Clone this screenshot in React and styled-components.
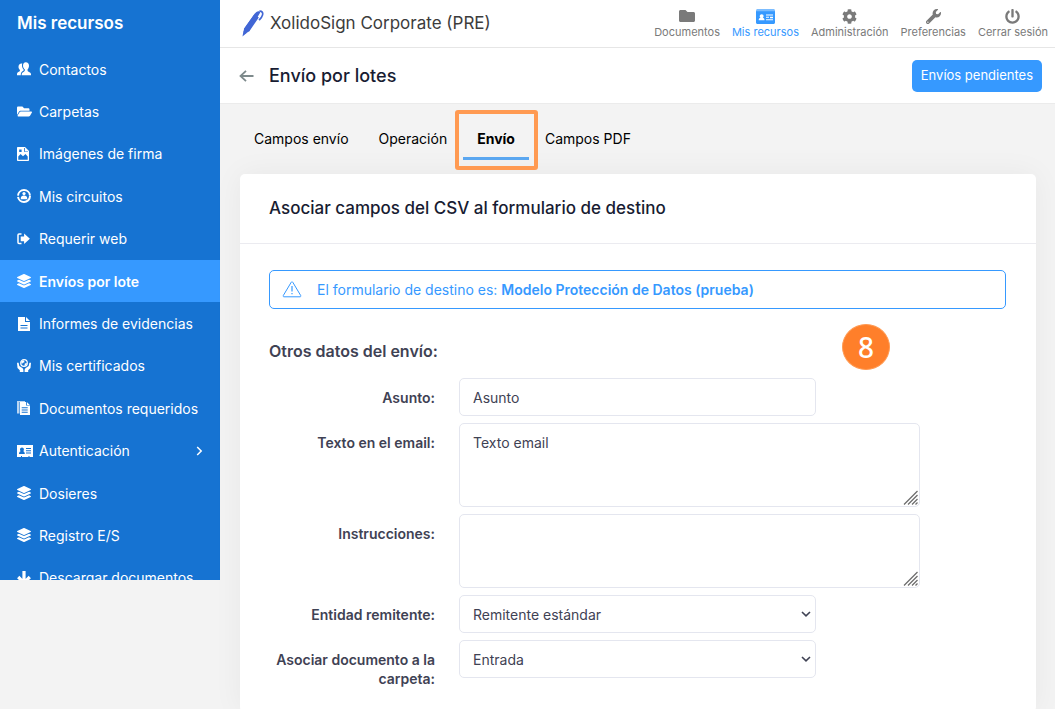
import { useState } from "react";
import styled, { createGlobalStyle, css } from "styled-components";
import {
  FaFolder,
  FaFolderOpen,
  FaLayerGroup,
  FaCog,
  FaWrench,
  FaPowerOff,
} from "react-icons/fa";

const GlobalStyle = createGlobalStyle`
  *, *::before, *::after {
    box-sizing: border-box;
  }

  body {
    margin: 0;
    background: #f3f3f3;
    color: #3f4254;
    font-family: "Inter", "Open Sans", sans-serif;
    font-size: 14px;
    line-height: 19px;
  }

  button, input, select, textarea {
    font: inherit;
    color: inherit;
  }

  h1, h2, h3, p, ul {
    margin: 0;
    padding: 0;
  }
`;

const ContactsIcon = () => (
  <svg width="14" height="14" viewBox="0 0 14 14" fill="currentColor">
    <path d="M8.800.3c2 0 3.200 1.400 3.200 3.400 0 1.500-.6 2.900-1.400 3.600v1.600c.5.900 3.400 1.300 3.400 3.100v1.200H4.700v-1c0-1.800 2.700-2.500 3.100-3.500V7.300C6.700 6.500 6 5.200 6 3.700 6 1.700 7 .3 8.800.3z" />
    <path d="M5.300 1.600C5 2.200 4.900 3 5 3.900c.1 1.400.8 2.900 1.800 3.800v.6C6.300 9 4 9.900 3.800 12v1.200H0v-1.500c0-1.500 2.500-1.800 2.900-2.700V7.900C2 7.200 1.500 6.100 1.500 4.700c0-1.800 1.400-3.500 3.800-3.100z" />
  </svg>
);

const SignatureImageIcon = () => (
  <svg width="12" height="14" viewBox="0 0 12 14" fill="currentColor">
    <path fillRule="evenodd" d="M1 0h7l4 4v9.200c0 .5-.4.800-.8.800H.8c-.5 0-.8-.3-.8-.8V1c0-.6.4-1 1-1zM1.300 9.500v3.200h9.400V9.500L8.500 7 6 9.300 3.600 7zM2.200 2.500V5h2.400V2.500zM7 1v3.800h4V4.200H7.800V1z" />
  </svg>
);

const CircuitIcon = () => (
  <svg width="14" height="14" viewBox="0 0 14 14" fill="none">
    <circle cx="7" cy="7" r="6" stroke="currentColor" strokeWidth="2" strokeDasharray="17.500 1.300" />
    <circle cx="7" cy="4.600" r="1.600" fill="currentColor" />
    <path d="M3.800 10.200V8.900c0-1.600 1.300-2.500 3.200-2.500s3.200.9 3.200 2.500v1.300z" fill="currentColor" />
  </svg>
);

const WebRequestIcon = () => (
  <svg width="13" height="12" viewBox="0 0 13 12" fill="none">
    <path d="M4.500 1H2c-.6 0-1 .4-1 1v7.500c0 .6.400 1 1 1h2.500" stroke="currentColor" strokeWidth="1.500" />
    <path d="M3.700 3.500h3.400V.5l5.800 5.300-5.800 5.300V8.200H3.700z" fill="currentColor" />
  </svg>
);

const ReportIcon = () => (
  <svg width="14" height="14" viewBox="0 0 14 14" fill="currentColor">
    <path fillRule="evenodd" d="M1 0h7v5h5v9H1zM3.500 8v1h7V8zm0 2.500v1h7v-1z" />
    <path d="M9 0l4 4H9z" />
  </svg>
);

const CertificateIcon = () => (
  <svg width="14" height="14" viewBox="0 0 14 14" fill="none">
    <circle cx="7" cy="4" r="3.300" stroke="currentColor" strokeWidth="1.200" />
    <path d="M4 2.500l3-1.200.5 2-2 .8-.5 1.500zM7.800 4.500l2.200-.5-.8 2.200-1.700.8z" fill="currentColor" />
    <path d="M0 3.800h1.600L2.300 7l3 2c.8.700 1.100 1.400 1.100 2.300V13H2.800v-1.800L.5 9zM14 3.800h-1.600L11.700 7l-3 2c-.8.700-1.100 1.400-1.100 2.300V13h3.600v-1.800L13.500 9z" fill="currentColor" />
  </svg>
);

const DocumentsIcon = () => (
  <svg width="13" height="14" viewBox="0 0 13 14" fill="currentColor">
    <path opacity=".7" d="M0 0h8v1H2.500v11.500H0z" />
    <path fillRule="evenodd" d="M3 1h6v3.500h4V14H3zM4.700 6.200v1h6v-1zm0 2.300v1h6v-1zm0 2.200v1h6v-1z" />
    <path d="M9.800 1L12.800 4h-3z" />
  </svg>
);

const IdCardIcon = () => (
  <svg width="16" height="12" viewBox="0 0 16 12" fill="currentColor">
    <path fillRule="evenodd" d="M0 0h16v12H0zM9 3v1h5V3zM9 5.300v1h5v-1zM9 7.600v1h5v-1zM2 9h5.800c0-1.500-.6-2.400-1.600-2.700.5-.4.700-1 .7-1.700C6.900 3.300 6.100 2.400 5 2.400S3 3.300 3 4.600c0 .7.300 1.300.7 1.700C2.600 6.600 2 7.500 2 9zm2 2v1h1v-1zm7.500 0v1h1v-1z" />
  </svg>
);

const DownloadIcon = () => (
  <svg width="14" height="14" viewBox="0 0 14 14" fill="none" stroke="currentColor" strokeWidth="3.200">
    <path d="M7 0v11.500M1.200 6L7 11.800 12.800 6" />
  </svg>
);

const ResourcesIcon = () => (
  <svg width="19" height="15" viewBox="0 0 19 15" fill="currentColor">
    <path opacity=".65" d="M0 1.500C0 .7.700 0 1.500 0h16c.8 0 1.500.7 1.500 1.500V3H0z" />
    <path fillRule="evenodd" d="M0 2.300h19v11.200c0 .8-.7 1.500-1.500 1.500h-16C.7 15 0 14.300 0 13.500zM2.700 11.300h5.800c0-1.500-.7-2.400-1.700-2.600.5-.3.800-.9.800-1.500 0-1.100-.8-1.900-1.900-1.900s-2 .8-2 1.900c0 .6.300 1.200.8 1.500-1.100.2-1.800 1.100-1.800 2.600zM10 5.500v1h7v-1zm0 2.300v1h3v-1zm4 0v1.400h3V7.800zM10 10.200v1h7v-1z" />
  </svg>
);

const PenLogo = () => (
  <svg width="22" height="28" viewBox="0 0 22 28" fill="#4166d5">
    <path d="M12.300 4.300C14 2 15.600.8 17.200 1.300c.9.300 1.200 1 .6 1.900L6.900 21.400 1.600 24.800l.3-5.500z" />
    <path d="M12.300 4.300l4.500 3.200L7.200 21.600l-5.300-2.800z" />
    <path d="M1.600 20.600l3.300 2.100L.5 26.500z" />
    <path d="M17.500 1.200c2.400-.2 3.700 1.400 3.100 3.700-.4 1.700-1.800 3.500-3.500 5.300" fill="none" stroke="#4166d5" strokeWidth="1.700" />
  </svg>
);

const BackIcon = () => (
  <svg width="15" height="12" viewBox="0 0 15 12" fill="none" stroke="#7e8a8c" strokeWidth="1.800">
    <path d="M14.500 6H1.800M7 .8L1.500 6 7 11.200" />
  </svg>
);

const WarningIcon = () => (
  <svg width="20" height="17" viewBox="0 0 20 17" fill="none" stroke="currentColor">
    <path d="M9.200 1.300c.4-.7 1.200-.7 1.600 0l7.900 13.200c.4.700 0 1.300-.7 1.300H2c-.7 0-1.100-.6-.7-1.300z" />
    <path d="M10 5v5.500M10 12v1.300" strokeWidth="1.200" />
  </svg>
);

const ChevronIcon = () => (
  <svg width="7" height="10" viewBox="0 0 7 10" fill="none" stroke="currentColor" strokeWidth="1.500">
    <path d="M1.200 1l4 4-4 4" />
  </svg>
);

const menuItems = [
  { label: "Contactos", icon: <ContactsIcon /> },
  { label: "Carpetas", icon: <FaFolderOpen size={15} /> },
  { label: "Imágenes de firma", icon: <SignatureImageIcon /> },
  { label: "Mis circuitos", icon: <CircuitIcon /> },
  { label: "Requerir web", icon: <WebRequestIcon /> },
  { label: "Envíos por lote", icon: <FaLayerGroup size={14} />, active: true },
  { label: "Informes de evidencias", icon: <ReportIcon /> },
  { label: "Mis certificados", icon: <CertificateIcon /> },
  { label: "Documentos requeridos", icon: <DocumentsIcon /> },
  { label: "Autenticación", icon: <IdCardIcon />, submenu: true },
  { label: "Dosieres", icon: <FaLayerGroup size={14} /> },
  { label: "Registro E/S", icon: <FaLayerGroup size={14} /> },
  { label: "Descargar documentos", icon: <DownloadIcon /> },
];

const topItems = [
  { label: "Documentos", icon: <FaFolder size={16} /> },
  { label: "Mis recursos", icon: <ResourcesIcon />, active: true },
  { label: "Administración", icon: <FaCog size={15} /> },
  { label: "Preferencias", icon: <FaWrench size={15} /> },
  { label: "Cerrar sesión", icon: <FaPowerOff size={15} /> },
];

const tabs = ["Campos envío", "Operación", "Envío", "Campos PDF"];

function ResizableText({ id, value, onChange, height }) {
  return (
    <TextAreaBox>
      <TextArea id={id} value={value} onChange={onChange} $height={height} />
      <Grip width="15" height="15" viewBox="0 0 15 15" aria-hidden="true">
        <path d="M1 14.500L14.500 1M5 14.500l9.500-9.500M9 14.500l5.500-5.500M12.500 14.500l2-2" />
      </Grip>
    </TextAreaBox>
  );
}

function SelectField({ id, children }) {
  return (
    <SelectBox>
      <Select id={id}>{children}</Select>
      <SelectArrow width="10" height="6" viewBox="0 0 10 6" aria-hidden="true">
        <path d="M1 1l4 3.800L9 1" />
      </SelectArrow>
    </SelectBox>
  );
}

function App() {
  const [form, setForm] = useState({
    asunto: "Asunto",
    texto: "Texto email",
    instrucciones: "",
  });

  const handleChange = (field) => (e) =>
    setForm({ ...form, [field]: e.target.value });

  return (
    <Layout>
      <GlobalStyle />
      <Sidebar>
        <SidebarTitle>Mis recursos</SidebarTitle>
        <Menu>
          {menuItems.map((item) => (
            <MenuItem key={item.label}>
              <MenuLink href="#" $active={item.active}>
                <MenuIcon>{item.icon}</MenuIcon>
                <span>{item.label}</span>
                {item.submenu && (
                  <MenuArrow>
                    <ChevronIcon />
                  </MenuArrow>
                )}
              </MenuLink>
            </MenuItem>
          ))}
        </Menu>
      </Sidebar>

      <Main>
        <Header>
          <Brand>
            <PenLogo />
            <span>XolidoSign Corporate (PRE)</span>
          </Brand>
          <TopNav>
            {topItems.map((item) => (
              <TopLink key={item.label} href="#" $active={item.active}>
                <TopIcon>{item.icon}</TopIcon>
                {item.label}
              </TopLink>
            ))}
          </TopNav>
        </Header>

        <SubHeader>
          <BackButton type="button" aria-label="Volver">
            <BackIcon />
          </BackButton>
          <PageTitle>Envío por lotes</PageTitle>
          <PrimaryButton type="button">Envíos pendientes</PrimaryButton>
        </SubHeader>

        <Content>
          <Tabs role="tablist">
            {tabs.map((tab) => (
              <Tab
                key={tab}
                type="button"
                role="tab"
                aria-selected={tab === "Envío"}
                $active={tab === "Envío"}
              >
                {tab}
                {tab === "Envío" && <Highlight />}
              </Tab>
            ))}
          </Tabs>

          <Card>
            <CardHeader>
              <CardTitle>Asociar campos del CSV al formulario de destino</CardTitle>
            </CardHeader>
            <CardBody>
              <Alert>
                <WarningIcon />
                <p>
                  El formulario de destino es:{" "}
                  <strong>Modelo Protección de Datos (prueba)</strong>
                </p>
              </Alert>

              <SectionTitle>
                Otros datos del envío:
                <StepBadge>8</StepBadge>
              </SectionTitle>

              <Form>
                <Row>
                  <Label htmlFor="asunto">Asunto:</Label>
                  <Input
                    id="asunto"
                    type="text"
                    value={form.asunto}
                    onChange={handleChange("asunto")}
                  />
                </Row>
                <Row>
                  <Label htmlFor="texto">Texto en el email:</Label>
                  <ResizableText
                    id="texto"
                    value={form.texto}
                    onChange={handleChange("texto")}
                    height={84}
                  />
                </Row>
                <Row>
                  <Label htmlFor="instrucciones">Instrucciones:</Label>
                  <ResizableText
                    id="instrucciones"
                    value={form.instrucciones}
                    onChange={handleChange("instrucciones")}
                    height={74}
                  />
                </Row>
                <Row>
                  <Label htmlFor="remitente">Entidad remitente:</Label>
                  <SelectField id="remitente">
                    <option>Remitente estándar</option>
                  </SelectField>
                </Row>
                <Row>
                  <Label htmlFor="carpeta">Asociar documento a la carpeta:</Label>
                  <SelectField id="carpeta">
                    <option>Entrada</option>
                  </SelectField>
                </Row>
              </Form>
            </CardBody>
          </Card>
        </Content>
      </Main>
    </Layout>
  );
}

export default App;

const Layout = styled.div`
  display: grid;
  grid-template-columns: 220px minmax(0, 1fr);
  align-items: start;
  height: 100vh;
  overflow: hidden;
`;

const Sidebar = styled.aside`
  max-height: calc(100vh - 129px);
  overflow: hidden;
  background: #1673d2;
  color: #ffffff;
`;

const SidebarTitle = styled.h2`
  padding: 11px 17px 13px;
  font-size: 17px;
  font-weight: 600;
  line-height: 24px;
`;

const Menu = styled.ul`
  display: flex;
  flex-direction: column;
  min-height: 551px;
  list-style: none;
`;

const MenuItem = styled.li`
  display: flex;
  flex: 1;
`;

const MenuLink = styled.a`
  display: flex;
  flex: 1;
  align-items: center;
  padding: 0 17px;
  color: #ffffff;
  text-decoration: none;
  white-space: nowrap;

  ${({ $active }) =>
    $active &&
    css`
      background: #3699ff;
      font-weight: 600;
    `}

  &:hover {
    background: #3699ff;
  }
`;

const MenuIcon = styled.span`
  display: flex;
  width: 22px;
`;

const MenuArrow = styled.span`
  display: flex;
  margin-left: auto;
`;

const Main = styled.main`
  display: flex;
  flex-direction: column;
  height: 100vh;
`;

const Header = styled.header`
  display: flex;
  flex-shrink: 0;
  justify-content: space-between;
  height: 48px;
  padding: 0 7px 0 22px;
  background: #ffffff;
  border-bottom: 1px solid #e6e6e6;
`;

const Brand = styled.div`
  display: flex;
  align-items: center;
  gap: 6px;
  font-size: 17px;
  color: #3c3c3c;
`;

const TopNav = styled.nav`
  display: flex;
  gap: 12px;
`;

const TopLink = styled.a`
  display: flex;
  flex-direction: column;
  align-items: center;
  padding-top: 8px;
  font-size: 11px;
  line-height: 16px;
  color: ${({ $active }) => ($active ? "#3699ff" : "#7a7a7a")};
  text-decoration: none;
  white-space: nowrap;
`;

const TopIcon = styled.span`
  display: flex;
  align-items: center;
  height: 16px;
`;

const SubHeader = styled.div`
  display: flex;
  flex-shrink: 0;
  align-items: center;
  gap: 15px;
  height: 56px;
  padding: 0 13px 0 19px;
  background: #ffffff;
  border-bottom: 1px solid #ebebeb;
`;

const BackButton = styled.button`
  display: flex;
  padding: 0;
  background: none;
  border: none;
  cursor: pointer;
`;

const PageTitle = styled.h1`
  flex: 1;
  font-size: 18px;
  font-weight: 500;
  line-height: 24px;
  color: #181c32;
`;

const PrimaryButton = styled.button`
  height: 32px;
  padding: 0 9px;
  background: #3699ff;
  border: none;
  border-radius: 5px;
  font-size: 13px;
  color: #ffffff;
  cursor: pointer;

  &:hover {
    background: #1c86f2;
  }
`;

const Content = styled.div`
  display: flex;
  flex: 1;
  flex-direction: column;
  padding: 17px 19px 0 20px;
`;

const Tabs = styled.div`
  display: flex;
  gap: 2px;
  margin-bottom: 14px;
`;

const Tab = styled.button`
  position: relative;
  padding: 8px 14px 9px;
  background: none;
  border: none;
  border-bottom: 3px solid ${({ $active }) => ($active ? "#5ba7f0" : "transparent")};
  font-weight: ${({ $active }) => ($active ? 700 : 400)};
  color: #000000;
  cursor: pointer;
`;

const Highlight = styled.span`
  position: absolute;
  inset: -11px -9px -13px -8px;
  border: 4px solid #ff9a52;
  border-radius: 3px;
  pointer-events: none;
`;

const Card = styled.section`
  flex: 1;
  background: #ffffff;
  border-radius: 5px;
  box-shadow: 0 0 30px rgba(0, 0, 0, 0.05);
`;

const CardHeader = styled.div`
  padding: 22px 29px 23px;
  border-bottom: 1px solid #ebebf0;
`;

const CardTitle = styled.h2`
  font-size: 17px;
  font-weight: 500;
  line-height: 24px;
  color: #181c32;
`;

const CardBody = styled.div`
  padding: 26px 30px 24px 29px;
`;

const Alert = styled.div`
  display: flex;
  align-items: center;
  gap: 15px;
  height: 39px;
  padding: 0 12px;
  border: 1px solid #3699ff;
  border-radius: 5px;
  color: #3699ff;

  strong {
    font-weight: 600;
  }
`;

const SectionTitle = styled.h3`
  position: relative;
  margin: 31px 0 15px;
  font-size: 16px;
  font-weight: 600;
  line-height: 23px;
`;

const StepBadge = styled.span`
  position: absolute;
  top: -16px;
  right: 116px;
  display: flex;
  align-items: center;
  justify-content: center;
  width: 48px;
  height: 46px;
  background: #ff7f2a;
  border: 1px solid #ff9a52;
  border-radius: 50%;
  font-family: "Noto Sans", "Open Sans", sans-serif;
  font-size: 28px;
  font-weight: 500;
  color: #ffffff;
`;

const Form = styled.form`
  display: flex;
  flex-direction: column;
  gap: 7px;
`;

const Row = styled.div`
  display: grid;
  grid-template-columns: 166px minmax(0, 1fr);
  column-gap: 24px;
  align-items: start;
`;

const Label = styled.label`
  padding-top: 10px;
  font-weight: 600;
  text-align: right;
`;

const fieldStyles = css`
  width: 100%;
  background: #ffffff;
  border: 1px solid #e4e6ef;
  border-radius: 5px;
  outline: none;

  &:focus {
    border-color: #69b3ff;
  }
`;

const Input = styled.input`
  ${fieldStyles}
  max-width: 357px;
  height: 38px;
  padding: 0 13px;
`;

const SelectBox = styled.div`
  position: relative;
  display: flex;
  max-width: 357px;
`;

const Select = styled.select`
  ${fieldStyles}
  height: 38px;
  padding: 0 24px 0 13px;
  appearance: none;
`;

const SelectArrow = styled.svg`
  position: absolute;
  top: 16px;
  right: 5px;
  fill: none;
  stroke: #3f4254;
  stroke-width: 1.6;
  pointer-events: none;
`;

const TextAreaBox = styled.div`
  position: relative;
  display: flex;
  max-width: 461px;
`;

const TextArea = styled.textarea`
  ${fieldStyles}
  height: ${({ $height }) => $height}px;
  padding: 9px 13px;
  resize: none;
`;

const Grip = styled.svg`
  position: absolute;
  right: 2px;
  bottom: 2px;
  fill: none;
  stroke: #6e6e6e;
  stroke-width: 1.3;
  pointer-events: none;
`;
